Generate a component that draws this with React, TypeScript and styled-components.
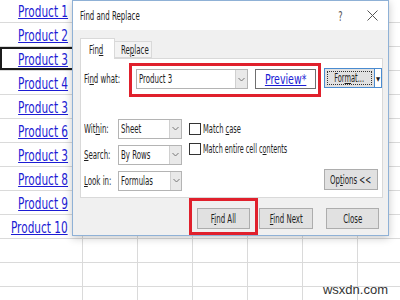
import { Fragment } from "react";
import { createGlobalStyle, styled } from "styled-components";

const condensed = `"DejaVu Sans Condensed", "Liberation Sans", sans-serif`;

const GlobalStyle = createGlobalStyle`
  html, body { margin: 0; padding: 0; background: #fff; }
  body { width: 400px; height: 300px; overflow: hidden; }
`;

const Page = styled.div`
  position: relative;
  width: 400px;
  height: 300px;
  overflow: hidden;
  font-family: ${condensed};
  color: #1e1e1e;
`;

// the screenshot is squeezed horizontally, so text is narrowed to fit
const Txt = styled.span<{ $o?: string; $s?: number }>`
  display: inline-block;
  white-space: nowrap;
  transform: scaleX(${(p) => p.$s ?? 0.65});
  transform-origin: ${(p) => p.$o ?? "left"} center;
`;

const Sheet = styled.div`
  display: grid;
  grid-template-columns: 83px repeat(6, 55px);
  grid-auto-rows: 24px;
  margin-top: -1px;
`;

const Cell = styled.div<{ $selected?: boolean }>`
  box-sizing: border-box;
  border-right: 1px solid #dadada;
  border-bottom: 1px solid #dadada;
  display: flex;
  align-items: center;
  justify-content: flex-end;
  padding-right: 14px;
  ${(p) => p.$selected && `box-shadow: inset 0 0 0 2px #1c1c1c;`}
`;

const ProductLink = styled(Txt)`
  color: #1c1cd4;
  text-decoration: underline;
  font-size: 15px;
  padding-top: 2px;
`;

const Dialog = styled.div`
  position: absolute;
  left: 72px;
  top: 0;
  width: 317px;
  height: 236px;
  box-sizing: border-box;
  border: 1px solid #8fb1d6;
  background: #f0f0f0;
  box-shadow: 0 2px 8px rgba(0, 0, 0, 0.22);
  display: flex;
  flex-direction: column;
  font-size: 12px;
  white-space: nowrap;
`;

const TitleBar = styled.div`
  height: 29px;
  background: #fff;
  display: flex;
  align-items: center;
  padding-left: 7px;
`;

const Title = styled.span`
  flex: 1;
  font-size: 13px;
  color: #222;
`;

const TitleButton = styled.span`
  width: 32px;
  display: flex;
  justify-content: center;
  color: #555;
  font-size: 14px;
`;

const Body = styled.div`
  flex: 1;
  padding: 8px 5px 0 7px;
  display: flex;
  flex-direction: column;
`;

const Tabs = styled.div`
  display: flex;
  align-items: flex-end;
  height: 20px;
  position: relative;
  z-index: 1;
`;

const Tab = styled.div<{ $active?: boolean }>`
  box-sizing: border-box;
  border: 1px solid #d9d9d9;
  border-bottom: ${(p) => (p.$active ? "none" : "1px solid #d9d9d9")};
  background: ${(p) => (p.$active ? "#fff" : "#f3f3f3")};
  width: ${(p) => (p.$active ? "35px" : "37px")};
  height: ${(p) => (p.$active ? "21px" : "17px")};
  margin-bottom: ${(p) => (p.$active ? "-1px" : "0")};
  padding: ${(p) => (p.$active ? "4px 0 0 8px" : "1px 0 0 6px")};
  ${(p) => !p.$active && "border-left: none;"}
`;

const Panel = styled.div`
  box-sizing: border-box;
  height: 140px;
  background: #fff;
  border: 1px solid #d9d9d9;
  padding: 4px 4px 7px 2px;
  display: flex;
  flex-direction: column;
`;

const FindRow = styled.div`
  display: flex;
  align-items: flex-start;
`;

const Label = styled.span<{ $w: number }>`
  width: ${(p) => p.$w}px;
  flex-shrink: 0;
  padding-left: 1px;
`;

const FindLabel = styled(Label)`
  padding-top: 9px;
`;

const Highlight = styled.div<{ $pad: string }>`
  display: flex;
  flex-shrink: 0;
  gap: 7px;
  border: 3px solid #e0202c;
  padding: ${(p) => p.$pad};
`;

const Combo = styled.div<{ $w: number }>`
  box-sizing: border-box;
  width: ${(p) => p.$w}px;
  height: 20px;
  border: 1px solid #b4b4b4;
  background: #fff;
  display: flex;
  align-items: center;
  padding-left: 2px;
  overflow: hidden;
`;

const ComboText = styled.span`
  flex: 1;
`;

const ArrowBox = styled.span`
  width: 11px;
  flex-shrink: 0;
  align-self: stretch;
  background: #e9e9e9;
  border-left: 1px solid #d0d0d0;
  display: flex;
  align-items: center;
  justify-content: center;
`;

const PreviewButton = styled.div`
  box-sizing: border-box;
  width: 61px;
  height: 20px;
  border: 1px solid #6f6f6f;
  background: #fff;
  color: #1c1cd4;
  text-decoration: underline;
  font-size: 14px;
  display: flex;
  align-items: center;
  justify-content: center;
`;

const SplitButton = styled.div`
  display: flex;
  flex-shrink: 0;
  margin: 5px 0 0 3px;
  height: 20px;
  box-sizing: border-box;
  border: 1px solid #4a8bd0;
  background: #e1e1e1;
`;

const SplitMain = styled.span`
  width: 43px;
  margin: 2px;
  border: 1px dotted #333;
  display: flex;
  align-items: center;
  justify-content: center;
`;

const SplitArrow = styled.span`
  width: 6px;
  background: #fff;
  border-left: 1px solid #4a8bd0;
  font-size: 6px;
  display: flex;
  align-items: center;
  justify-content: center;
`;

const Options = styled.div`
  flex: 1;
  display: flex;
  align-items: flex-start;
  margin-top: 22px;
`;

const SelectCol = styled.div`
  display: flex;
  flex-direction: column;
  flex-shrink: 0;
  gap: 7px;
`;

const SelectRow = styled.div`
  display: flex;
  align-items: center;
  height: 19px;
`;

const CheckCol = styled.div`
  flex: 1;
  min-width: 0;
  display: flex;
  flex-direction: column;
  gap: 7px;
  margin-left: 7px;
  margin-top: 3px;
`;

const CheckRow = styled.div`
  display: flex;
  align-items: center;
  gap: 2px;
  height: 13px;
`;

const CheckBox = styled.span`
  box-sizing: border-box;
  width: 12px;
  height: 12px;
  border: 1px solid #333;
  background: #fff;
  flex-shrink: 0;
`;

const Button = styled.div<{ $w: number }>`
  box-sizing: border-box;
  flex-shrink: 0;
  width: ${(p) => p.$w}px;
  height: 21px;
  border: 1px solid #adadad;
  background: #e1e1e1;
  display: flex;
  align-items: center;
  justify-content: center;
`;

const OptionsButton = styled(Button)`
  align-self: flex-end;
`;

const Footer = styled.div`
  display: flex;
  align-items: flex-start;
  justify-content: flex-end;
  padding-right: 4px;
`;

const FooterButton = styled(Button)<{ $ml: number }>`
  margin-top: 10px;
  margin-left: ${(p) => p.$ml}px;
`;

const Watermark = styled.span`
  position: absolute;
  right: 12px;
  bottom: 3px;
  font-family: "Liberation Sans", sans-serif;
  font-size: 13px;
  color: #333;
`;

const Chevron = () => (
  <svg width="7" height="5" viewBox="0 0 7 5">
    <polyline points="0.5,1 3.5,4 6.5,1" fill="none" stroke="#777" strokeWidth="1" />
  </svg>
);

const CloseIcon = () => (
  <svg width="11" height="11" viewBox="0 0 11 11">
    <path d="M0.5 0.5 L10.5 10.5 M10.5 0.5 L0.5 10.5" stroke="#555" strokeWidth="1" fill="none" />
  </svg>
);

const products = ["Product 1", "Product 2", "Product 3", "Product 4", "Product 3", "Product 6", "Product 3", "Product 8", "Product 9", "Product 10", "", "", "", ""];

const selects = [
  { label: <>Wit<u>h</u>in:</>, value: "Sheet" },
  { label: <><u>S</u>earch:</>, value: "By Rows" },
  { label: <><u>L</u>ook in:</>, value: "Formulas" },
];

const App = () => {
  return (
    <Page>
      <GlobalStyle />
      <Sheet>
        {products.map((p, i) => (
          <Fragment key={i}>
            <Cell $selected={i === 2}>
              {p && <ProductLink $o="right" $s={0.78}>{p}</ProductLink>}
            </Cell>
            {[0, 1, 2, 3, 4, 5].map((c) => (
              <Cell key={c} />
            ))}
          </Fragment>
        ))}
      </Sheet>

      <Dialog>
        <TitleBar>
          <Title><Txt $s={0.6}>Find and Replace</Txt></Title>
          <TitleButton><Txt $o="center">?</Txt></TitleButton>
          <TitleButton><CloseIcon /></TitleButton>
        </TitleBar>
        <Body>
          <Tabs>
            <Tab $active><Txt>Fin<u>d</u></Txt></Tab>
            <Tab><Txt>Re<u>p</u>lace</Txt></Tab>
          </Tabs>
          <Panel>
            <FindRow>
              <FindLabel $w={45}><Txt>Fi<u>n</u>d what:</Txt></FindLabel>
              <Highlight $pad="3px 2px 5px 4px">
                <Combo $w={112}>
                  <ComboText><Txt>Product 3</Txt></ComboText>
                  <ArrowBox><Chevron /></ArrowBox>
                </Combo>
                <PreviewButton><Txt $o="center" $s={0.75}>Preview*</Txt></PreviewButton>
              </Highlight>
              <SplitButton>
                <SplitMain><Txt $o="center" $s={0.62}>For<u>m</u>at...</Txt></SplitMain>
                <SplitArrow>▼</SplitArrow>
              </SplitButton>
            </FindRow>
            <Options>
              <SelectCol>
                {selects.map((s, i) => (
                  <SelectRow key={i}>
                    <Label $w={34}><Txt>{s.label}</Txt></Label>
                    <Combo $w={64}>
                      <ComboText><Txt>{s.value}</Txt></ComboText>
                      <ArrowBox><Chevron /></ArrowBox>
                    </Combo>
                  </SelectRow>
                ))}
              </SelectCol>
              <CheckCol>
                <CheckRow><CheckBox /><Txt $s={0.62}>Match <u>c</u>ase</Txt></CheckRow>
                <CheckRow><CheckBox /><Txt $s={0.6}>Match entire cell c<u>o</u>ntents</Txt></CheckRow>
              </CheckCol>
              <OptionsButton $w={54}><Txt $o="center">Op<u>t</u>ions &lt;&lt;</Txt></OptionsButton>
            </Options>
          </Panel>
          <Footer>
            <Highlight $pad="7px 5px 3px">
              <Button $w={53}><Txt $o="center">F<u>i</u>nd All</Txt></Button>
            </Highlight>
            <FooterButton $w={54} $ml={1}><Txt $o="center"><u>F</u>ind Next</Txt></FooterButton>
            <FooterButton $w={53} $ml={13}><Txt $o="center">Close</Txt></FooterButton>
          </Footer>
        </Body>
      </Dialog>
      <Watermark>wsxdn.com</Watermark>
    </Page>
  );
};

export default App;
